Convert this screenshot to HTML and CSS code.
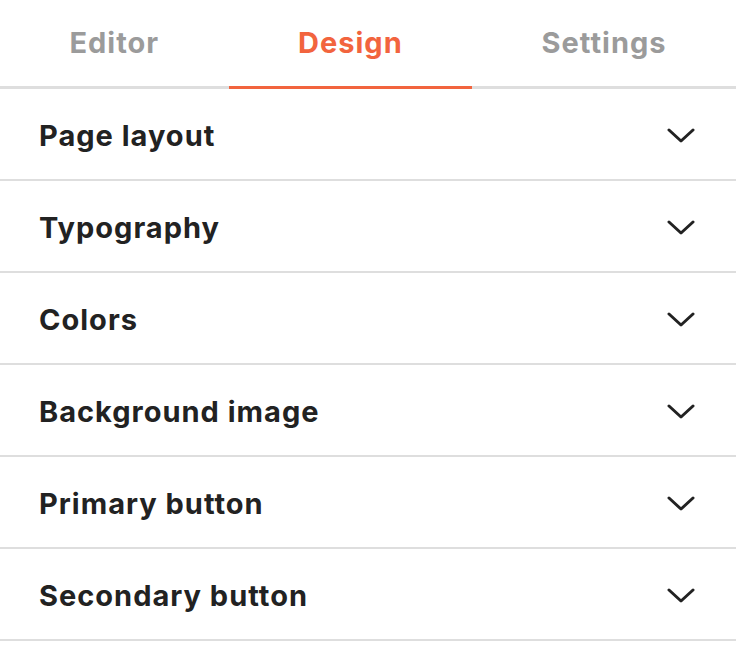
FILE: index.html
```html
<!DOCTYPE html>
<html>
<head>
<meta charset="utf-8">
<link rel="stylesheet" href="styles.css">
</head>
<body>
<div class="panel">
  <div class="tabs">
    <div class="tab">Editor</div>
    <div class="tab active">Design</div>
    <div class="tab">Settings</div>
  </div>
  <div class="list">
    <div class="row"><span class="label">Page layout</span><svg class="chev" viewBox="0 0 28 16"><path d="M2 2 L14 13 L26 2"/></svg></div>
    <div class="row"><span class="label">Typography</span><svg class="chev" viewBox="0 0 28 16"><path d="M2 2 L14 13 L26 2"/></svg></div>
    <div class="row"><span class="label">Colors</span><svg class="chev" viewBox="0 0 28 16"><path d="M2 2 L14 13 L26 2"/></svg></div>
    <div class="row"><span class="label">Background image</span><svg class="chev" viewBox="0 0 28 16"><path d="M2 2 L14 13 L26 2"/></svg></div>
    <div class="row"><span class="label">Primary button</span><svg class="chev" viewBox="0 0 28 16"><path d="M2 2 L14 13 L26 2"/></svg></div>
    <div class="row"><span class="label">Secondary button</span><svg class="chev" viewBox="0 0 28 16"><path d="M2 2 L14 13 L26 2"/></svg></div>
  </div>
</div>
</body>
</html>
```

FILE: styles.css
```css
html, body {
  margin: 0;
  padding: 0;
  background: #ffffff;
}
body {
  font-family: Inter, "Noto Sans", "Liberation Sans", sans-serif;
  width: 736px;
  height: 668px;
  overflow: hidden;
}
.tabs {
  display: flex;
  height: 86px;
  border-bottom: 3px solid #dedede;
}
.tab {
  flex: 1 1 auto;
  display: flex;
  align-items: center;
  justify-content: center;
  font-size: 29px;
  font-weight: 700;
  letter-spacing: 1px;
  color: #9b9b9b;
  margin-bottom: -3px;
  border-bottom: 3px solid transparent;
  padding-bottom: 1px;
}
.tab.active {
  color: #f2643e;
  border-bottom-color: #f2643e;
}
.row {
  display: flex;
  align-items: center;
  justify-content: space-between;
  height: 87px;
  padding: 3px 41px 0 39px;
  border-bottom: 2px solid #dedede;
}
.label {
  font-size: 29px;
  font-weight: 700;
  letter-spacing: 1px;
  color: #222222;
}
.chev {
  width: 28px;
  height: 16px;
  fill: none;
  stroke: #222222;
  stroke-width: 3;
  stroke-linecap: round;
  stroke-linejoin: round;
}
```
